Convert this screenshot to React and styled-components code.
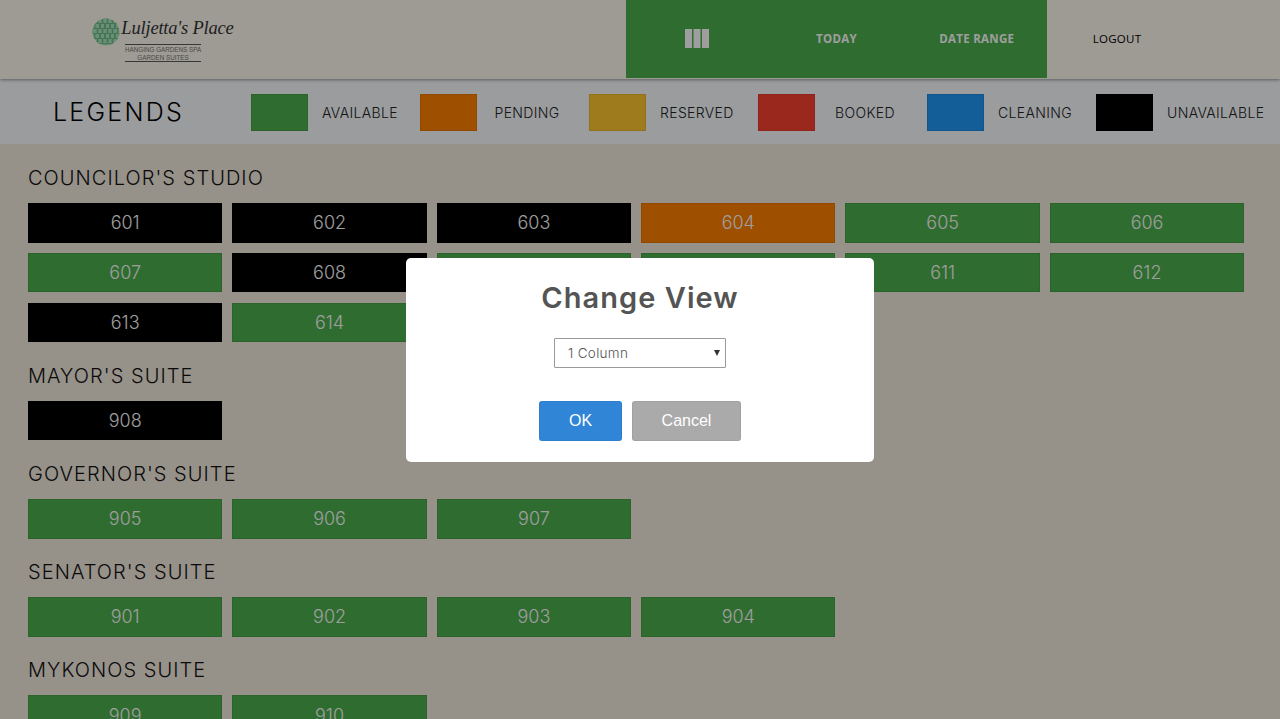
import React from 'react'
import styled, { createGlobalStyle } from 'styled-components'

const GlobalStyle = createGlobalStyle`
  html, body {
    margin: 0;
    height: 100%;
    overflow: hidden;
    background: #f2eadd;
    font-family: Inter, "Open Sans", sans-serif;
  }
  * { box-sizing: border-box; }
`

const Header = styled.header`
  display: flex;
  height: 79px;
  background: #fffaf0;
  box-shadow: 0 1px 3px rgba(0, 0, 0, 0.4);
  position: relative;
`
const LogoArea = styled.div`
  width: 626px;
  padding: 15px 0 0 92px;
  display: flex;
  align-items: flex-start;
  gap: 1px;
`
const LogoText = styled.div`
  display: flex;
  flex-direction: column;
  align-items: center;
  width: 113px;
`
const LogoName = styled.div`
  font-family: "Liberation Serif", serif;
  font-style: italic;
  font-size: 18.5px;
  line-height: 27px;
  letter-spacing: -0.2px;
  white-space: nowrap;
  color: #333;
`
const LogoSub = styled.div`
  margin: 2px 0 0 -29px;
  width: 76px;
  padding: 1px 0 0;
  border-top: 1px solid #5a5a55;
  border-bottom: 1px solid #5a5a55;
  font-family: "Liberation Sans", sans-serif;
  font-size: 6.3px;
  line-height: 7.5px;
  text-align: center;
  white-space: nowrap;
  color: #77776f;
`
const NavGroup = styled.nav`
  display: flex;
  height: 78px;
  background: #4cae4d;
`
const NavItem = styled.div`
  width: 140.3px;
  height: 78px;
  padding-bottom: 2px;
  display: flex;
  align-items: center;
  justify-content: center;
  font-family: "Open Sans", sans-serif;
  font-size: 11.5px;
  font-weight: ${p => (p.$dark ? 500 : 700)};
  letter-spacing: 0.3px;
  color: ${p => (p.$dark ? '#000' : '#fff')};
`

const LegendBar = styled.section`
  display: flex;
  align-items: center;
  height: 65px;
  background: #f9fcff;
`
const LegendTitle = styled.h2`
  width: 251px;
  margin: 0;
  padding-left: 53px;
  font-size: 25px;
  font-weight: 300;
  letter-spacing: 2.25px;
  color: #000;
`
const LegendItem = styled.div`
  display: flex;
  align-items: center;
  width: 169px;
  padding-top: 2px;
`
const Swatch = styled.span`
  width: 57px;
  height: 37px;
  flex: none;
  background: ${p => p.$color};
  border: 1px solid rgba(0, 0, 0, 0.08);
`
const LegendLabel = styled.span`
  min-width: 100px;
  padding: 0 14px;
  text-align: center;
  white-space: nowrap;
  font-size: 14px;
  font-weight: 300;
  letter-spacing: 0.35px;
  color: #222;
`

const Content = styled.main`
  padding: 22px 35.8px 0 28px;
`
const Section = styled.section`
  margin-bottom: 21.6px;
`
const SectionTitle = styled.h3`
  margin: 0 0 13px;
  font-size: 20px;
  line-height: 24px;
  font-weight: 300;
  letter-spacing: 1.05px;
  color: #111;
`
const RoomGrid = styled.div`
  display: grid;
  grid-template-columns: repeat(6, 1fr);
  gap: 10.2px 10px;
`
const Room = styled.div`
  height: 39.6px;
  display: flex;
  align-items: center;
  justify-content: center;
  font-size: 18px;
  font-weight: 300;
  color: #fff;
  background: ${p => p.$color};
  border: 1px solid rgba(0, 0, 0, 0.08);
`

const Overlay = styled.div`
  position: fixed;
  inset: 0;
  display: flex;
  align-items: center;
  justify-content: center;
  background: rgba(0, 0, 0, 0.38);
`
const Modal = styled.div`
  width: 468px;
  height: 204px;
  padding-top: 23px;
  display: flex;
  flex-direction: column;
  align-items: center;
  background: #fff;
  border-radius: 5px;
`
const ModalTitle = styled.h2`
  margin: 0;
  font-size: 29px;
  line-height: 34px;
  font-weight: 600;
  letter-spacing: 1.05px;
  color: #545454;
`
const SelectWrap = styled.div`
  position: relative;
  margin-top: 23px;
  width: 172px;
  height: 30px;
`
const Select = styled.select`
  appearance: none;
  width: 100%;
  height: 100%;
  padding: 0 0 0 13px;
  border: 1px solid #999;
  border-radius: 1px;
  background: #fff;
  font-family: Inter, sans-serif;
  font-size: 13.5px;
  font-weight: 300;
  letter-spacing: 0.3px;
  color: #555;
`
const SelectArrow = styled.span`
  position: absolute;
  right: 6px;
  top: 12px;
  width: 0;
  height: 0;
  border-left: 3px solid transparent;
  border-right: 3px solid transparent;
  border-top: 6px solid #333;
  pointer-events: none;
`
const Actions = styled.div`
  margin-top: 33px;
  display: flex;
  gap: 10px;
`
const Button = styled.button`
  width: ${p => p.$width}px;
  height: 40px;
  padding: 0;
  border: 1px solid rgba(0, 0, 0, 0.05);
  border-radius: 3px;
  font-family: "Liberation Sans", sans-serif;
  font-size: 16px;
  color: #fff;
  background: ${p => p.$color};
`

const GREEN = '#4cae4d'
const BLACK = '#000'
const ORANGE = '#ff8000'

const legends = [
  ['AVAILABLE', GREEN],
  ['PENDING', ORANGE],
  ['RESERVED', '#ffc830'],
  ['BOOKED', '#fa4130'],
  ['CLEANING', '#2096f5'],
  ['UNAVAILABLE', BLACK],
]

const sections = [
  {
    title: "COUNCILOR'S STUDIO",
    rooms: [
      ['601', BLACK], ['602', BLACK], ['603', BLACK], ['604', ORANGE], ['605', GREEN], ['606', GREEN],
      ['607', GREEN], ['608', BLACK], ['609', GREEN], ['610', GREEN], ['611', GREEN], ['612', GREEN],
      ['613', BLACK], ['614', GREEN],
    ],
  },
  { title: "MAYOR'S SUITE", rooms: [['908', BLACK]] },
  { title: "GOVERNOR'S SUITE", rooms: [['905', GREEN], ['906', GREEN], ['907', GREEN]] },
  { title: "SENATOR'S SUITE", rooms: [['901', GREEN], ['902', GREEN], ['903', GREEN], ['904', GREEN]] },
  { title: 'MYKONOS SUITE', rooms: [['909', GREEN], ['910', GREEN]] },
]

function LogoMark() {
  const dots = []
  for (let row = 0; row < 5; row++) {
    for (let col = 0; col < 5; col++) {
      dots.push(
        <circle key={`${row}-${col}`} cx={3 + col * 5 + (row % 2 ? 2.5 : 0)} cy={3 + row * 5} r="3" fill="none" stroke="#6cb587" strokeWidth="1" />
      )
    }
  }
  return (
    <svg width="28" height="28" viewBox="0 0 28 28" style={{ flex: 'none', marginTop: 3 }}>
      <defs>
        <clipPath id="logo-clip">
          <circle cx="14" cy="14" r="13.5" />
        </clipPath>
      </defs>
      <circle cx="14" cy="14" r="13.5" fill="#a8e8bb" />
      <g clipPath="url(#logo-clip)">{dots}</g>
    </svg>
  )
}

function ColumnsIcon() {
  return (
    <svg width="24" height="19" viewBox="0 0 24 19" fill="#fff" style={{ marginLeft: 1 }}>
      <rect x="0" y="0" width="7" height="19" />
      <rect x="8.5" y="0" width="7" height="19" />
      <rect x="17" y="0" width="7" height="19" />
    </svg>
  )
}

export default function App() {
  return (
    <div>
      <GlobalStyle />
      <Header>
        <LogoArea>
          <LogoMark />
          <LogoText>
            <LogoName>Luljetta's Place</LogoName>
            <LogoSub>HANGING GARDENS SPA<br />GARDEN SUITES</LogoSub>
          </LogoText>
        </LogoArea>
        <NavGroup>
          <NavItem><ColumnsIcon /></NavItem>
          <NavItem>TODAY</NavItem>
          <NavItem>DATE RANGE</NavItem>
        </NavGroup>
        <NavItem $dark>LOGOUT</NavItem>
      </Header>

      <LegendBar>
        <LegendTitle>LEGENDS</LegendTitle>
        {legends.map(([label, color]) => (
          <LegendItem key={label}>
            <Swatch $color={color} />
            <LegendLabel>{label}</LegendLabel>
          </LegendItem>
        ))}
      </LegendBar>

      <Content>
        {sections.map(section => (
          <Section key={section.title}>
            <SectionTitle>{section.title}</SectionTitle>
            <RoomGrid>
              {section.rooms.map(([number, color]) => (
                <Room key={number} $color={color}>{number}</Room>
              ))}
            </RoomGrid>
          </Section>
        ))}
      </Content>

      <Overlay>
        <Modal>
          <ModalTitle>Change View</ModalTitle>
          <SelectWrap>
            <Select defaultValue="1">
              <option value="1">1 Column</option>
              <option value="2">2 Columns</option>
            </Select>
            <SelectArrow />
          </SelectWrap>
          <Actions>
            <Button $width={83} $color="#3085d6">OK</Button>
            <Button $width={109} $color="#aaa">Cancel</Button>
          </Actions>
        </Modal>
      </Overlay>
    </div>
  )
}
